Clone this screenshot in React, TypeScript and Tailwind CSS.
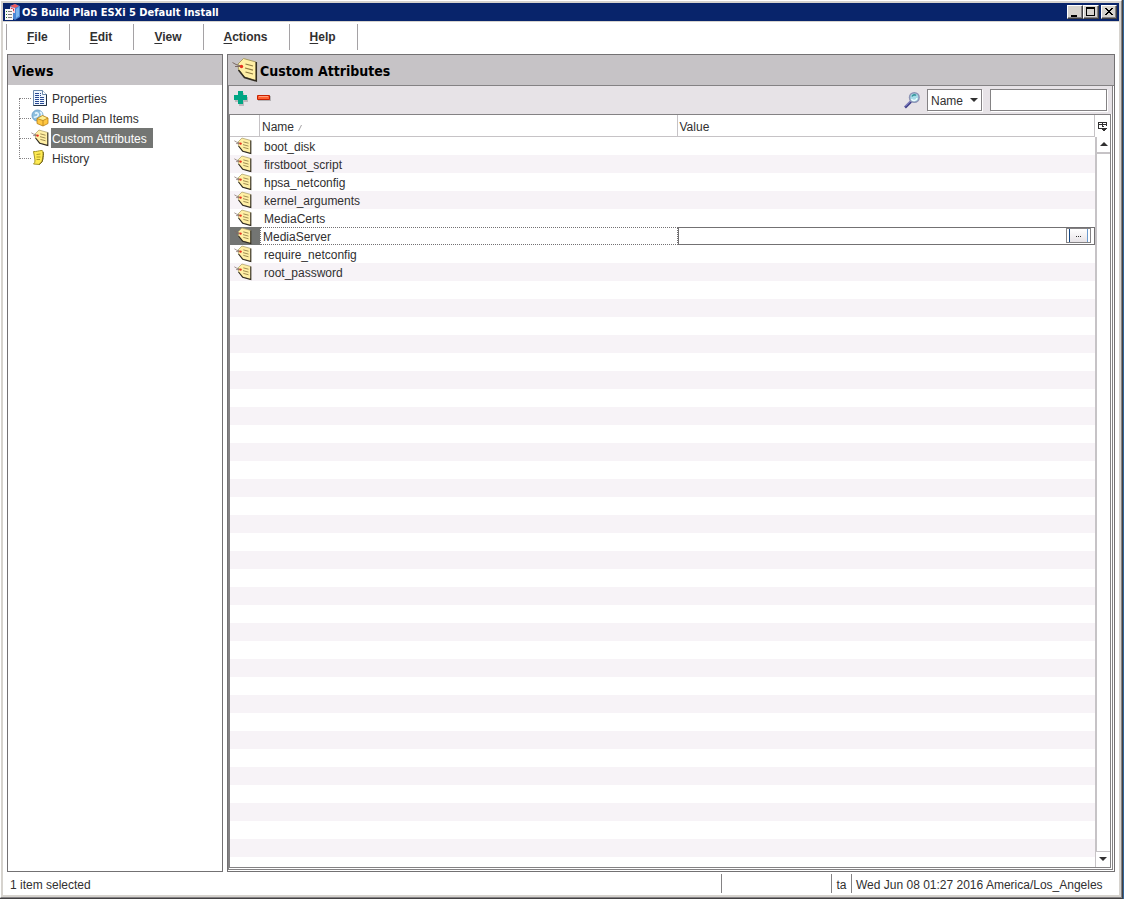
import { useState } from 'react'
import type { ReactNode } from 'react'

type IconProps = { className?: string }

const MENUS = ['File', 'Edit', 'View', 'Actions', 'Help']

const VIEWS = [
    { label: 'Properties', Icon: PropertiesIcon },
    { label: 'Build Plan Items', Icon: BuildPlanIcon },
    { label: 'Custom Attributes', Icon: TagIcon },
    { label: 'History', Icon: HistoryIcon },
]

const ATTRIBUTES = [
    'boot_disk',
    'firstboot_script',
    'hpsa_netconfig',
    'kernel_arguments',
    'MediaCerts',
    'MediaServer',
    'require_netconfig',
    'root_password',
]

export default function App() {
    const [view, setView] = useState('Custom Attributes')

    return (
        // Desktop edge, then the two-step window shadow, then the frame
        <div className="flex min-h-screen border-r border-[#31659c] bg-white font-['Liberation_Sans',Arial,sans-serif] text-[12px] leading-4 text-[#313031]">
            <div className="flex min-w-0 flex-1 border-r border-b border-[#424142]">
                <div className="flex min-w-0 flex-1 border-t border-l border-r border-b border-t-white border-l-white border-r-[#848284] border-b-[#848284]">
                    <div className="flex min-w-0 flex-1 flex-col border-2 border-[#d6d3ce]">
                        <TitleBar />
                        <MenuBar />
                        <main className="flex flex-1 gap-1 px-1">
                            <ViewsPanel view={view} onSelect={setView} />
                            <AttributesPanel />
                        </main>
                        <StatusBar />
                    </div>
                </div>
            </div>
        </div>
    )
}

function TitleBar() {
    return (
        <header className="flex h-[19px] items-center border-b border-[#d6d3ce] bg-[#08246b] pr-[2px] pl-[2px]">
            <AppIcon className="h-4 w-4 shrink-0" />
            <h1 className="ml-[1px] flex-1 pt-px font-['DejaVu_Sans_Condensed','DejaVu_Sans',sans-serif] text-[11px] font-bold text-white">
                OS Build Plan ESXi 5 Default Install
            </h1>
            <CaptionButton label="Minimize">
                <path d="M4 10h6v2H4z" />
            </CaptionButton>
            <CaptionButton label="Maximize">
                <path d="M3 2h9v9H3zM4 4v6h7V4z" fillRule="evenodd" />
            </CaptionButton>
            <span className="w-[2px]" />
            <CaptionButton label="Close">
                <path d="M4 3h2v1h1v1h2V4h1V3h2v1h-1v1h-1v1H9v1h1v1h1v1h1v1h-2V9H9V8H7v1H6v1H4V9h1V8h1V7h1V6H6V5H5V4H4z" />
            </CaptionButton>
        </header>
    )
}

function CaptionButton({
    label,
    children,
}: {
    label: string
    children: ReactNode
}) {
    return (
        <button
            type="button"
            aria-label={label}
            className="h-[14px] w-4 shrink-0 border border-t-white border-r-[#424142] border-b-[#424142] border-l-white bg-[#d6d3ce] shadow-[inset_-1px_-1px_0_#848284]"
        >
            <svg
                viewBox="1 1 14 12"
                className="block h-3 w-[14px]"
                shapeRendering="crispEdges"
                fill="#000"
            >
                {children}
            </svg>
        </button>
    )
}

function MenuBar() {
    return (
        <nav className="flex px-[3px] pt-[2px] pb-1">
            {MENUS.map((name, i) => (
                <button
                    key={name}
                    type="button"
                    className={`h-[26px] border-r border-[#a5a2a5] pr-[21px] pl-5 font-bold ${
                        i === 0 ? 'border-l' : ''
                    }`}
                >
                    <span className="underline underline-offset-2">
                        {name[0]}
                    </span>
                    {name.slice(1)}
                </button>
            ))}
        </nav>
    )
}

function ViewsPanel({
    view,
    onSelect,
}: {
    view: string
    onSelect: (label: string) => void
}) {
    return (
        <aside className="w-[216px] shrink-0 border border-[#737173]">
            <h2 className="flex h-[30px] items-center bg-[#c6c3c6] px-1 pt-[2px] font-['DejaVu_Sans_Condensed','DejaVu_Sans',sans-serif] text-[14px] font-bold text-black">
                Views
            </h2>
            <ul className="pt-[3px] pl-[11px]">
                {VIEWS.map(({ label, Icon }, i) => (
                    <li key={label} className="flex h-5 items-center">
                        {/* Dotted branch lines */}
                        <span className="flex h-5 w-3 flex-col">
                            <span
                                className={`h-[11px] border-b border-dotted border-[#848284] ${
                                    i > 0 ? 'border-l' : ''
                                }`}
                            />
                            <span
                                className={`h-[9px] border-dotted border-[#848284] ${
                                    i < VIEWS.length - 1 ? 'border-l' : ''
                                }`}
                            />
                        </span>
                        <Icon className="h-[18px] w-[18px] shrink-0" />
                        <button
                            type="button"
                            onClick={() => onSelect(label)}
                            className={`ml-[2px] h-5 pt-[2px] pr-1.5 pl-px whitespace-nowrap ${
                                label === view
                                    ? 'bg-[#737573] text-white'
                                    : ''
                            }`}
                        >
                            {label}
                        </button>
                    </li>
                ))}
            </ul>
        </aside>
    )
}

function AttributesPanel() {
    return (
        <section className="flex min-w-0 flex-1 flex-col border border-[#737173]">
            <h2 className="flex h-[31px] items-center gap-[2px] border-b border-[#848284] bg-[#c6c3c6] pl-1 font-['DejaVu_Sans_Condensed','DejaVu_Sans',sans-serif] text-[14px] font-bold text-black">
                <TagIcon className="h-[26px] w-[26px] shrink-0" />
                <span className="pt-[2px]">Custom Attributes</span>
            </h2>
            <div className="mr-px mb-px flex flex-1 flex-col border-r border-b border-l border-[#848284]">
                <Toolbar />
                <div className="mr-px mb-px flex flex-1 border border-[#848284]">
                    {/* Stripes carry on below the last row */}
                    <div className="min-w-0 flex-1 bg-[repeating-linear-gradient(#fff_0_18px,#f7f3f7_18px_36px)] bg-[position:0_22px]">
                        <AttributeTable />
                    </div>
                    <ScrollBar />
                </div>
            </div>
        </section>
    )
}

function Toolbar() {
    return (
        <div className="flex h-7 items-center bg-[#e7e3e7] pr-[5px] pl-1">
            <button type="button" aria-label="Add" className="mb-1">
                <svg viewBox="0 0 16 16" className="block h-4 w-4">
                    <path d="M6 3h5v4h4v5h-4v4H6v-4H2V7h4z" fill="#bdbabd" />
                    <path d="M5 1h5v4h4v5h-4v4H5v-4H1V5h4z" fill="#00a684" />
                </svg>
            </button>
            <button type="button" aria-label="Remove" className="mb-1 ml-2">
                <svg viewBox="0 0 14 16" className="block h-4 w-[14px]">
                    <path d="M1 6h13v5H1z" fill="#b5b2b5" />
                    <path d="M.5 5.500h12v4H.5z" fill="#ff6131" stroke="#c62000" />
                    <path d="M2 6.500h9" stroke="#ff9e7b" />
                </svg>
            </button>
            <form
                role="search"
                className="ml-auto flex items-center"
                onSubmit={(e) => e.preventDefault()}
            >
                <SearchIcon className="mr-1.5 h-[18px] w-[18px]" />
                <div className="relative mr-2">
                    <select
                        aria-label="Search field"
                        className="block h-[22px] w-[55px] appearance-none border border-[#848284] bg-white pt-px pl-[3px] shadow-[1px_1px_0_#fff]"
                    >
                        <option>Name</option>
                        <option>Value</option>
                    </select>
                    <svg
                        viewBox="0 0 8 4"
                        className="pointer-events-none absolute top-[9px] right-1 h-1 w-2"
                        fill="#313031"
                    >
                        <path d="M0 0h8L4 4z" />
                    </svg>
                </div>
                <input
                    type="text"
                    aria-label="Search text"
                    className="h-[22px] w-[117px] border border-[#848284] bg-white px-1 shadow-[1px_1px_0_#fff] outline-none"
                />
            </form>
        </div>
    )
}

function AttributeTable() {
    return (
        <table className="w-full table-fixed border-separate border-spacing-0 text-left">
            <thead>
                <tr className="h-[22px] bg-white">
                    <th
                        aria-label="Type"
                        className="w-[30px] border-r border-b border-[#c6c3c6] p-0"
                    />
                    <th className="border-r border-b border-[#c6c3c6] p-0 pt-[2px] pl-[2px] font-normal">
                        Name
                        <svg
                            viewBox="0 0 4 6"
                            className="ml-1 inline-block h-1.5 w-1 align-baseline"
                            fill="none"
                            stroke="#a5a2a5"
                        >
                            <path d="M.5 6L3.500 0" />
                        </svg>
                    </th>
                    <th className="border-r border-b border-[#c6c3c6] p-0 pt-[2px] pl-[2px] font-normal">
                        Value
                    </th>
                </tr>
            </thead>
            <tbody>
                {ATTRIBUTES.map((name) =>
                    name === 'MediaServer' ? (
                        <EditingRow key={name} name={name} />
                    ) : (
                        <tr key={name} className="h-[18px]">
                            <td className="p-0 pl-1">
                                <TagIcon className="block h-[18px] w-[18px]" />
                            </td>
                            <td className="p-0 pt-[2px] pl-1">{name}</td>
                            <td className="p-0" />
                        </tr>
                    )
                )}
            </tbody>
        </table>
    )
}

function EditingRow({ name }: { name: string }) {
    return (
        <tr className="h-[18px] bg-white">
            <td className="bg-[#737573] p-0 pl-1">
                <TagIcon className="block h-[18px] w-[18px]" />
            </td>
            <td className="border border-dotted border-[#737173] p-0 pt-[2px] pl-[2px] leading-[14px]">
                {name}
            </td>
            <td className="border border-[#737173] p-0">
                <div className="flex h-4 pr-[3px]">
                    <input
                        type="text"
                        aria-label={`${name} value`}
                        className="min-w-0 flex-1 bg-white px-[2px] outline-none"
                    />
                    <button
                        type="button"
                        aria-label="Edit value"
                        className="flex h-[15px] w-[25px] items-stretch border border-[#848284] bg-white px-[2px]"
                    >
                        <span className="flex flex-1 items-center justify-center gap-px border-r border-l border-r-[#6b9ace] border-l-[#184984] bg-linear-to-b from-white to-[#e7e3e7] pt-px">
                            <i className="h-px w-px bg-[#313031]" />
                            <i className="h-px w-px bg-[#313031]" />
                            <i className="h-px w-px bg-[#313031]" />
                        </span>
                    </button>
                </div>
            </td>
        </tr>
    )
}

function ScrollBar() {
    return (
        <div className="flex w-[15px] shrink-0 flex-col bg-white">
            <button
                type="button"
                aria-label="Choose columns"
                className="flex h-[22px] items-center justify-center"
            >
                <svg
                    viewBox="0 0 11 11"
                    className="h-[11px] w-[11px]"
                    shapeRendering="crispEdges"
                    fill="#313031"
                >
                    <path d="M1 1h9v1H1zM1 3h9v1H1zM1 1h1v7H1zM5 1h1v5H5zM9 1h1v4H9zM1 7h3v1H1z" />
                    <path d="M6 5h1v2h3v1H9v1H8v1H7V9H6V8H5V7h1z" />
                    <path d="M4 6h6v1H4z" fill="#fff" />
                    <path d="M4 7h6v1H9v1H8v1H6V9H5V8H4z" />
                </svg>
            </button>
            <button
                type="button"
                aria-label="Scroll up"
                className="flex h-[15px] items-center justify-center border-l-2 border-[#c6c3c6] pb-[2px]"
            >
                <svg viewBox="0 0 8 4" className="h-1 w-2" fill="#313031">
                    <path d="M0 4h8L4 0z" />
                </svg>
            </button>
            <div className="flex-1 border-t-2 border-l-2 border-[#c6c3c6]" />
            <button
                type="button"
                aria-label="Scroll down"
                className="flex h-4 items-center justify-center border-t border-l border-[#c6c3c6] pb-px"
            >
                <svg viewBox="0 0 8 4" className="h-1 w-2" fill="#313031">
                    <path d="M0 0h8L4 4z" />
                </svg>
            </button>
        </div>
    )
}

function StatusBar() {
    return (
        <footer className="flex h-[23px] items-center">
            <span className="flex-1 pt-[2px] pl-[7px]">1 item selected</span>
            <span className="h-[19px] w-[110px] border-l border-[#848284]" />
            <span className="flex h-[19px] w-5 items-center justify-center border-l border-[#848284] pt-[2px]">
                ta
            </span>
            <span className="flex h-[19px] min-w-[268px] items-center border-l border-[#848284] pt-[2px] pr-2 pl-1 whitespace-nowrap">
                Wed Jun 08 01:27 2016 America/Los_Angeles
            </span>
        </footer>
    )
}

function TagIcon({ className }: IconProps) {
    return (
        <svg viewBox="0 0 26 26" className={className} fill="none">
            <path
                d="M11.500 1.500L24 5V23.500L12.500 20 6.500 12.500 6 7z"
                fill="#ffefa5"
                stroke="#a59a63"
            />
            <path
                d="M24.300 5v19L12.500 20.500 6.500 13"
                stroke="#312c21"
                strokeWidth="1.500"
            />
            <path
                d="M13.500 7l7.500 2M13 11l8 2.200M13.500 15l7.500 2"
                stroke="#8c7942"
                strokeWidth="1.200"
            />
            <path
                d="M.5 5.500L4 7.500l5 1.500M3 9.500h5"
                stroke="#7b6963"
                strokeWidth="1"
            />
            <circle cx="9.500" cy="9.500" r="1.700" fill="#e73021" />
        </svg>
    )
}

function PropertiesIcon({ className }: IconProps) {
    return (
        <svg viewBox="0 0 18 18" className={className} fill="none">
            <path d="M2.500 1.500h9l4 4v11h-13z" fill="#eff7ff" stroke="#6b8aad" />
            <path d="M15.500 5v11.500h-13" stroke="#213042" />
            <path d="M11.500 1.500v4h4" fill="#fff" stroke="#6b8aad" />
            <path
                d="M4 4.500h6M4 6.500h6M4 8.500h10M4 10.500h10M4 12.500h10M4 14.500h10"
                stroke="#294994"
                strokeDasharray="4 1"
            />
        </svg>
    )
}

function BuildPlanIcon({ className }: IconProps) {
    return (
        <svg viewBox="0 0 18 18" className={className} fill="none">
            <circle cx="6.500" cy="6.500" r="5.500" fill="#8cbede" stroke="#6ba2ce" />
            <path
                d="M4 4.500c2-1.500 4 0 3 2s-3 1-4 2M9 3c2 1 2 3 1 4"
                stroke="#e7f7ff"
                strokeWidth="1.600"
            />
            <path d="M6 9.500l5.500-3 5.500 2.500v5.500L12 17l-6-2.500z" fill="#ffc742" />
            <path d="M6 9.500l5.500-3L17 9l-5 2.500z" fill="#ffef94" />
            <path
                d="M6 9.500l5.500-3L17 9v5.500L12 17l-6-2.500zM6 9.500l6 2L17 9M12 11.500V17"
                stroke="#b57d18"
                strokeWidth=".8"
            />
        </svg>
    )
}

function HistoryIcon({ className }: IconProps) {
    return (
        <svg viewBox="0 0 18 18" className={className} fill="none">
            <path
                d="M2.500 2.500c3 .5 5-1 8.500-1 2 1 1 3 1 5l-1 6-2.500 3-6-.5c2-1.500 1.500-4 1-7z"
                fill="#ffeb52"
                stroke="#a5962a"
            />
            <path d="M12 3c1 2 0 5 0 7l-1 3-3 2.500" stroke="#736318" />
            <path
                d="M5.500 5.500l4-.5M5.500 8h4M5.500 10.500h3.500"
                stroke="#a59220"
                strokeWidth=".9"
            />
        </svg>
    )
}

function SearchIcon({ className }: IconProps) {
    return (
        <svg viewBox="0 0 18 18" className={className} fill="none">
            <path d="M2 16.500l6-6" stroke="#42418c" strokeWidth="2.600" />
            <path d="M2 15.500l5.500-5.500" stroke="#b5b6e7" strokeWidth=".9" />
            <circle
                cx="11.300"
                cy="6.500"
                r="4.800"
                fill="#a5dbe7"
                stroke="#8c92b5"
                strokeWidth="1.500"
            />
            <path d="M8.500 8c1 2.500 5 2 5.500-1" stroke="#eff" strokeWidth="1.500" />
            <path d="M9 5.500c1-2 3-2 4-1" stroke="#39969c" strokeWidth="1.600" />
        </svg>
    )
}

function AppIcon({ className }: IconProps) {
    return (
        <svg viewBox="0 0 16 16" className={className}>
            <path d="M5 2l5-2 5 2v11l-5 3-5-3z" fill="#4a86d6" />
            <path d="M5 2l5-2 4 2-4 2z" fill="#ef5a5a" />
            <path d="M5 3l5 1v5H5z" fill="#f7cbd6" />
            <path d="M6 4l3 1v2L6 6z" fill="#d62031" />
            <path d="M11 5l3-2v9l-3 2z" fill="#7bb6ef" />
            <path d="M0 5h8v11H0z" fill="#f7f7f7" />
            <path
                d="M1 7h1v1H1zM1 10h1v1H1zM1 13h1v1H1z"
                fill="#218221"
            />
            <path d="M3 7h4v1H3zM3 10h4v1H3zM3 13h4v1H3z" fill="#7b797b" />
        </svg>
    )
}
